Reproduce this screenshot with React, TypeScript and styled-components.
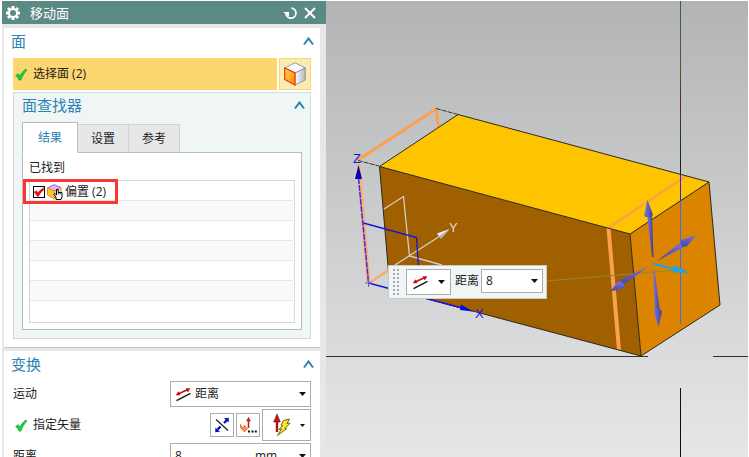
import React from "react";
import styled, { createGlobalStyle, css } from "styled-components";

const GlobalStyle = createGlobalStyle`
  * { box-sizing: border-box; }
  body {
    margin: 0;
    background: #fff;
    color: #1c1c1c;
    font-family: "Open Sans", "Noto Sans CJK SC", sans-serif;
    font-size: 12px;
    line-height: 20px;
    overflow: hidden;
  }
  button, input, select { font: inherit; color: inherit; margin: 0; padding: 0; }
  svg { display: block; }
`;

const Window = styled.div`
  display: grid;
  grid-template-columns: minmax(300px, 326px) 1fr;
  height: 100vh;
  padding: 1px 1px 0 0;
  overflow: hidden;
`;

/* ---------- dialog ---------- */

const Dialog = styled.aside`
  display: flex;
  flex-direction: column;
  gap: 4px;
  margin-left: 2px;
  min-height: 0;
  overflow: hidden;
  background: #e7e7e7;
`;

const TitleBar = styled.header`
  display: flex;
  flex: none;
  align-items: center;
  height: 23px;
  padding: 0 6px 0 3px;
  background: #5b8983;
  color: #fff;
`;

const DialogTitle = styled.h1`
  flex: 1;
  margin: 0 0 0 9px;
  font-size: 13px;
  font-weight: 400;
`;

const BarButton = styled.button`
  display: flex;
  align-items: center;
  justify-content: center;
  width: 20px;
  height: 20px;
  border: 0;
  background: none;
`;

const Card = styled.section`
  flex: none;
  margin: 0 6px 0 2px;
  padding: 0 9px 8px;
  background: #fff;
  box-shadow: 0 1px 0 #c8c8c8;
`;

const SectionHead = styled.div<{ $nested?: boolean }>`
  display: flex;
  align-items: center;
  justify-content: space-between;
  height: 26px;
  margin-bottom: 4px;
  padding-right: 0;
  ${(p) =>
    p.$nested
      ? css`
          height: 24px;
          margin-bottom: 5px;
          padding-right: 5px;
          padding-left: 8px;
        `
      : css`
          margin-left: -2px;
          margin-right: -3px;
        `}
`;

const SectionTitle = styled.h2`
  margin: 0;
  color: #2b82b4;
  font-size: 15px;
  font-weight: 400;
  line-height: 22px;
`;

const CollapseButton = styled.button`
  width: 11px;
  height: 10px;
  border: 0;
  background: none;
  margin-right: 0;
  ${SectionHead} > & { flex: none; }
`;

const SelectRow = styled.div`
  display: flex;
  gap: 2px;
  height: 32px;
`;

const SelectStep = styled.button`
  display: flex;
  flex: 1;
  align-items: center;
  gap: 6px;
  padding-left: 2px;
  border: 0;
  background: #fcd66f;
`;

const CubeButton = styled.button`
  display: flex;
  align-items: center;
  justify-content: center;
  width: 32px;
  border: 1px solid #fcd66f;
  background: #f9ebb4;
`;

const Finder = styled.section`
  margin-top: 2px;
  padding-bottom: 8px;
  border: 1px solid #d8dada;
  background: #f0f6f6;
`;

const Tabs = styled.div`
  display: flex;
  align-items: flex-end;
  margin: 0 8px -1px;
  height: 31px;
`;

const Tab = styled.button<{ $active?: boolean }>`
  width: 51px;
  height: 29px;
  border: 1px solid #d3d3d3;
  border-left-width: 0;
  border-bottom-color: #bbb;
  background: #e7e7e7;
  ${(p) =>
    p.$active &&
    css`
      position: relative;
      width: 56px;
      height: 31px;
      border-color: #bbb;
      border-left-width: 1px;
      border-bottom-color: #fff;
      background: #fff;
      color: #2b82b4;
    `}
`;

const TabPage = styled.div`
  margin: 0 8px;
  padding: 5px 6px 6px;
  border: 1px solid #bbb;
  background: #fff;
`;

const FoundLabel = styled.div`
  height: 22px;
`;

const ResultList = styled.ul`
  margin: 0;
  padding: 0 1px 1px 0;
  border: 1px solid #d8d8d8;
  list-style: none;
`;

const ResultRow = styled.li`
  height: 20px;
  border-bottom: 1px solid #e6e6e6;
  &:nth-child(even) { background: #f9f9f9; }
  &:last-child { border-bottom: 0; }
  &:first-child { position: relative; z-index: 1; }
`;

const ResultLabel = styled.label`
  display: flex;
  align-items: center;
  height: 21px;
  gap: 2px;
  padding-left: 3px;
`;

const TickBox = styled.input`
  width: 12px;
  height: 12px;
  border: 1px solid #000;
  appearance: none;
  background: #fff;
  &:not(:checked) + svg { display: none; }
`;

const TickWrap = styled.span`
  position: relative;
  display: inline-flex;
  svg {
    position: absolute;
    left: 1px;
    top: 1px;
    pointer-events: none;
  }
`;

const Highlight = styled.span`
  position: absolute;
  left: -7px;
  top: -2px;
  width: 95px;
  height: 25px;
  border: 3px solid #fb3434;
  pointer-events: none;
`;

const Fields = styled.div`
  display: grid;
  grid-template-columns: 1fr 141px;
  row-gap: 2px;
  align-items: center;
`;

const FieldLabel = styled.label`
  display: flex;
  align-items: center;
  gap: 6px;
`;

const StepLabel = styled.span`
  display: flex;
  align-items: center;
  gap: 6px;
  padding-left: 2px;
`;

const Combo = styled.div<{ $h: number; $w?: number }>`
  display: flex;
  align-items: center;
  height: ${(p) => p.$h}px;
  ${(p) => p.$w && css`width: ${p.$w}px;`}
  padding: 0 4px;
  border: 1px solid #acacac;
  background: #fff;
  svg { flex: none; }
`;

const Picker = styled.select`
  flex: 1;
  min-width: 0;
  height: 20px;
  margin-left: 3px;
  border: 0;
  outline: 0;
  appearance: none;
  background: none;
`;

const NumberBox = styled.input`
  flex: 1;
  min-width: 0;
  width: 20px;
  height: 20px;
  border: 0;
  outline: 0;
  background: none;
`;

const UnitPicker = styled(Picker)`
  flex: none;
  width: 44px;
  margin: 0;
`;

const VectorTools = styled.div`
  display: flex;
  align-items: center;
  justify-content: flex-end;
  gap: 2px;
`;

const ToolButton = styled.button<{ $large?: boolean }>`
  display: flex;
  flex: none;
  align-items: center;
  justify-content: center;
  width: 24px;
  height: 24px;
  border: 1px solid #acacac;
  background: #fff;
  ${(p) =>
    p.$large &&
    css`
      justify-content: space-between;
      width: 49px;
      height: 32px;
      padding: 0 5px 0 9px;
    `}
`;

/* ---------- graphics view ---------- */

const Viewport = styled.main`
  position: relative;
  min-width: 0;
  min-height: 0;
  overflow: hidden;
  background: linear-gradient(#b3b4b6, #cacbcc 45%, #dbdcdd 78%, #e5e6e7);
`;

const Scene = styled.svg`
  width: 100%;
  height: 100%;
`;

const FloatingBar = styled.div`
  position: absolute;
  left: 62px;
  top: 264px;
  display: flex;
  align-items: flex-start;
  height: 34px;
  padding: 3px 3px 0 4px;
  border: 1px solid #c6cccc;
  background: #f0f6f6;
`;

const FloatLabel = styled.label`
  margin: 2px 2px 0 4px;
`;

const Grip = styled.span`
  width: 6px;
  height: 26px;
  margin-right: 7px;
`;

const MotionButton = styled.button`
  display: flex;
  align-items: center;
  justify-content: space-between;
  width: 45px;
  height: 26px;
  padding: 0 5px;
  border: 1px solid #acacac;
  background: #fff;
`;

/* ---------- icons ---------- */

const GearIcon = () => (
  <svg width="16" height="16" viewBox="0 0 16 16">
    <g stroke="#fff" strokeWidth="3">
      <path d="M8 1v14M1 8h14M3 3l10 10M13 3L3 13" />
    </g>
    <circle cx="8" cy="8" r="5" fill="#fff" />
    <circle cx="8" cy="8" r="3" fill="#5b8983" />
  </svg>
);

const ResetIcon = () => (
  <svg width="14" height="14" viewBox="0 0 14 14">
    <path d="M8.500 2.200A5 5 0 1 1 3 8" fill="none" stroke="#fff" strokeWidth="1.800" />
    <path d="M0 6h6v4.500z" fill="#fff" />
  </svg>
);

const CloseIcon = () => (
  <svg width="12" height="12" viewBox="0 0 12 12" stroke="#fff" strokeWidth="2">
    <path d="M1 1l10 10M11 1L1 11" />
  </svg>
);

const ChevronUp = () => (
  <svg width="11" height="10" viewBox="0 0 11 10" fill="none" stroke="#2b82b4" strokeWidth="2">
    <path d="M1 8.500l4.500-6 4.500 6" />
  </svg>
);

const CheckIcon = () => (
  <svg width="12" height="13" viewBox="0 0 12 13">
    <path
      d="M.8 7.500l2.400-1.700 2 2.400C6.500 5.200 8.500 2.500 11 1l.6 1.600C9 5 7 8.500 5.800 12H4.200C3.500 10.300 2.300 8.700.8 7.500z"
      fill="#23cf3c"
      stroke="#12a830"
      strokeWidth=".9"
    />
  </svg>
);

const FaceCubeIcon = () => (
  <svg width="22" height="24" viewBox="0 0 22 24">
    <defs>
      <linearGradient id="cubeFace" x2="1" y2="1">
        <stop offset="0" stopColor="#ffd83a" />
        <stop offset="1" stopColor="#ff8c10" />
      </linearGradient>
      <linearGradient id="cubeSide" x2="1">
        <stop offset="0" stopColor="#fff" />
        <stop offset="1" stopColor="#b5b5b9" />
      </linearGradient>
    </defs>
    <path d="M.7 6L11 .8 21.300 6 11 11z" fill="#fbfbff" stroke="#888" strokeWidth=".8" />
    <path d="M11 11l10.300-5v12L11 23z" fill="url(#cubeSide)" stroke="#888" strokeWidth=".8" />
    <path d="M.7 6L11 11v12L.7 17.500z" fill="url(#cubeFace)" stroke="#f03018" strokeWidth="1.200" />
  </svg>
);

const RedTick = () => (
  <svg width="10" height="10" viewBox="0 0 10 10">
    <path d="M0 5l2.500-1.500 1.500 2C5.500 3.500 7.500 1.500 9.800.5v2.800C7.500 4.800 6 6.800 4.800 9.500H3.200z" fill="#e01010" />
  </svg>
);

const OffsetIcon = () => (
  <svg width="16" height="16" viewBox="0 0 16 16">
    <path d="M.5 4L7 .7 14 3.500 7.500 7z" fill="#dcb5fa" stroke="#a65bdc" />
    <path d="M.5 4l7 3v8l-7-4z" fill="#ffc329" stroke="#f08a12" />
    <path d="M7.500 7L14 3.500V10l-6.500 4z" fill="#ffe09a" stroke="#e68a2c" />
    <path
      d="M9 15.500V13L6.700 10.300l1-.9L9.500 11V5.500h1.700V8.500H15v4.500l-1 2.500z"
      fill="#fff"
      stroke="#000"
    />
    <path d="M11.300 8.500v2M13.200 8.500v2" stroke="#000" strokeWidth=".7" />
  </svg>
);

const DistanceIcon = () => (
  <svg width="17" height="15" viewBox="0 0 17 15">
    <path d="M3 7L13 2.500" stroke="#c40c0c" strokeWidth="1.600" />
    <path d="M.8 8.300L3.300 4.200 5.400 8.200zM15.300 1.200L12.800 5.400 10.700 1.200z" fill="#c40c0c" />
    <path d="M1.500 13.700L15.500 6.400" stroke="#151515" strokeWidth="1.400" />
  </svg>
);

const Caret = ({ small }: { small?: boolean }) => (
  <svg width={small ? 5 : 7} height={small ? 3 : 4} viewBox="0 0 7 4">
    <path d="M0 0h7L3.500 4z" fill="#111" />
  </svg>
);

const ReverseIcon = () => (
  <svg width="16" height="16" viewBox="0 0 16 16">
    <path d="M2 2.500L14 13.500" stroke="#222" strokeWidth="1.300" />
    <path d="M3.500 12.500l3-3M10 6l3-3" stroke="#0810bd" strokeWidth="2.400" />
    <path d="M1.300 15.300V10.500l4.700 4.300zM14.700.7v4.800L10 1.200z" fill="#0810bd" />
  </svg>
);

const VectorDialogIcon = () => (
  <svg width="18" height="18" viewBox="0 0 18 18">
    <path d="M9.500 12V4" stroke="#c51818" strokeWidth="1.600" />
    <path d="M9.500 .8l2.300 4.500H7.200z" fill="#c51818" />
    <path d="M1.500 8.500C2 11 3.500 11.500 5 11.500V9.300L8.500 12.800 5 16v-2C2.500 14 .8 12 1.500 8.500z" fill="#f8a33a" stroke="#e2571d" strokeWidth=".8" />
    <path d="M9 14.500h2v2h-2zM12.500 14.500h2v2h-2zM15.800 14.500h2v2h-2z" fill="#111" />
  </svg>
);

const InferredVectorIcon = () => (
  <svg width="19" height="24" viewBox="0 0 19 24">
    <path d="M5 19V7" stroke="#b30f0f" strokeWidth="2.400" />
    <path d="M5 1l3.300 8H1.700z" fill="#c51818" stroke="#7d0909" strokeWidth=".6" />
    <path d="M11.500 7.500l6-1.500-2.500 4.500 3-.3-5 5.300 1.500.3L5.500 22.500l4-6.500-2.500.5 3.500-4-1.500-.3z" fill="#ffe52e" stroke="#5d5518" strokeWidth=".9" />
  </svg>
);

const GripDots = () => (
  <svg width="6" height="26" viewBox="0 0 6 26" fill="#aaaaaa">
    {[0, 4, 8, 12, 16, 20, 24].map((y) => (
      <g key={y}>
        <path d={`M0 ${y}h2v2h-2z`} />
        <path d={`M4 ${y}h2v2h-2z`} />
      </g>
    ))}
  </svg>
);

const Model = () => (
  <Scene viewBox="326 1 422 456" preserveAspectRatio="xMinYMin slice" role="img" aria-label="3D">
    <defs>
      <linearGradient id="shaft" x2="1">
        <stop offset="0" stopColor="#7774dc" />
        <stop offset=".5" stopColor="#5f5cbf" />
        <stop offset="1" stopColor="#3d3a86" />
      </linearGradient>
      <linearGradient id="shaftFlat" x2="0" y2="1">
        <stop offset="0" stopColor="#7875e0" />
        <stop offset="1" stopColor="#4744a2" />
      </linearGradient>
      <linearGradient id="guide" gradientUnits="userSpaceOnUse" x1="0" x2="0" y1="1" y2="174">
        <stop offset="0" stopColor="#4c5a4c" />
        <stop offset=".4" stopColor="#54562c" />
        <stop offset=".58" stopColor="#5a2525" />
        <stop offset=".68" stopColor="#343d34" />
        <stop offset="1" stopColor="#112211" />
      </linearGradient>
    </defs>
    <path d="M326 356.500H648M713 356.500H748" stroke="#3a2a32" />
    <path d="M358 160L436 109L438.500 128" fill="none" stroke="#fca04c" strokeWidth="3" />
    <path d="M358 160.500L379 166M436 108.500L458 114.500" stroke="#30343a" strokeDasharray="5 1" />

    <path d="M379.500 166.500L458 114.500L709 182L630 234z" fill="#ffc400" />
    <path d="M379.500 166.500L630 234L641 356L390 289z" fill="#a06000" />
    <path d="M630 234L709 182L720 305L641 356z" fill="#db8400" />
    <path d="M608.500 228L686 176" stroke="#fca04c" strokeWidth="2.500" />
    <path d="M608.500 228L619 350" stroke="#fca04c" strokeWidth="4" />
    <path
      d="M379.500 166.500L458 114.500L709 182L720 305L641 356L390 289zM379.500 166.500L630 234L709 182M630 234L641 356"
      fill="none"
      stroke="#2b2920"
      strokeWidth="1"
    />
    <path d="M546 281L690 269" stroke="#9a823c" />

    <path d="M358.500 164L368.500 282.500" stroke="#f6b07c" strokeWidth="4" />
    <path d="M358.500 178L368.500 282.500" stroke="#4c28d8" strokeWidth="1.500" strokeDasharray="6 1" />
    <path d="M368.500 283.500L388 270.500" stroke="#f6ab70" strokeWidth="2.500" />
    <path d="M384 209L403.500 196.500L409.500 256L442 265M388 269.500L440 236" fill="none" stroke="#d3cccb" strokeWidth="1.300" />
    <path d="M437 233.500L449.500 229L441 238.800z" fill="#f1f1f1" />
    <path d="M439 236L449.500 229L441 238.800z" fill="#b4b0aa" />
    <path d="M363.500 223L416.500 237.500L418.500 266M368.500 283L462 308" fill="none" stroke="#1712df" strokeWidth="1.300" />
    <path d="M355 179L358.500 165L362 179z" fill="#0404ae" />
    <path d="M461 304.500L473 311.500L460 310z" fill="#0505e9" />
    <path d="M365 283h7M368.500 279v8" stroke="#6557d9" />
    <g fontFamily="Liberation Sans" fontSize="13">
      <text x="353" y="163" fill="#1616ee">Z</text>
      <text x="449" y="232" fill="#dddddd">Y</text>
      <text x="475" y="318" fill="#1616ee">X</text>
    </g>

    <path d="M680.500 1V174" stroke="url(#guide)" />
    <path d="M680.500 174V324" stroke="#3e70e4" />
    <path d="M680.500 174V201" stroke="#2424ef" />
    <path d="M680.500 388V457" stroke="#160d0b" />

    <path d="M647 214h5l1.500 43h-1.500z" fill="url(#shaft)" />
    <path d="M647.500 200L653 215Q649 219 644 216z" fill="url(#shaft)" />
    <path d="M653.200 270h1.300L660 312h-5z" fill="url(#shaft)" />
    <path d="M653.800 311Q658 307 662 311L658.500 327z" fill="url(#shaft)" />
    <path d="M657 261L681 242L684 247z" fill="url(#shaftFlat)" />
    <path d="M681 240L696.500 235L687 246Q679 249 681 240z" fill="url(#shaftFlat)" />
    <path d="M649.500 266L620 280L623 285z" fill="url(#shaftFlat)" />
    <path d="M610.500 291.500L617 282Q626 281 624 288z" fill="url(#shaftFlat)" />
    <path d="M653 263.500L675 269.500" stroke="#15a9ec" strokeWidth="2" />
    <path d="M674.500 265.500L689 273L674 272.500Q671 269 674.500 265.500z" fill="#12a8ed" />
  </Scene>
);

type HeadProps = { title: string; nested?: boolean };

const Heading = ({ title, nested }: HeadProps) => (
  <SectionHead $nested={nested}>
    <SectionTitle>{title}</SectionTitle>
    <CollapseButton aria-label={title}>
      <ChevronUp />
    </CollapseButton>
  </SectionHead>
);

export default function App() {
  return (
    <>
      <GlobalStyle />
      <Window>
        <Dialog>
          <TitleBar>
            <GearIcon />
            <DialogTitle>移动面</DialogTitle>
            <BarButton aria-label="重置"><ResetIcon /></BarButton>
            <BarButton aria-label="关闭"><CloseIcon /></BarButton>
          </TitleBar>

          <Card>
            <Heading title="面" />
            <SelectRow>
              <SelectStep>
                <CheckIcon />
                选择面 (2)
              </SelectStep>
              <CubeButton aria-label="面"><FaceCubeIcon /></CubeButton>
            </SelectRow>
            <Finder>
              <Heading title="面查找器" nested />
              <Tabs role="tablist">
                <Tab role="tab" aria-selected="true" $active>结果</Tab>
                <Tab role="tab" aria-selected="false">设置</Tab>
                <Tab role="tab" aria-selected="false">参考</Tab>
              </Tabs>
              <TabPage role="tabpanel">
                <FoundLabel>已找到</FoundLabel>
                <ResultList>
                  <ResultRow>
                    <ResultLabel>
                      <TickWrap>
                        <TickBox type="checkbox" defaultChecked />
                        <RedTick />
                      </TickWrap>
                      <OffsetIcon />
                      偏置 (2)
                    </ResultLabel>
                    <Highlight />
                  </ResultRow>
                  {[1, 2, 3, 4, 5, 6].map((n) => (
                    <ResultRow key={n} />
                  ))}
                </ResultList>
              </TabPage>
            </Finder>
          </Card>

          <Card>
            <Heading title="变换" />
            <Fields>
              <FieldLabel htmlFor="motion">运动</FieldLabel>
              <Combo $h={26}>
                <DistanceIcon />
                <Picker id="motion" defaultValue="d"><option value="d">距离</option></Picker>
                <Caret />
              </Combo>
              <StepLabel>
                <CheckIcon />
                指定矢量
              </StepLabel>
              <VectorTools>
                <ToolButton aria-label="反向"><ReverseIcon /></ToolButton>
                <ToolButton aria-label="矢量对话框"><VectorDialogIcon /></ToolButton>
                <ToolButton aria-label="自动判断的矢量" $large>
                  <InferredVectorIcon />
                  <Caret small />
                </ToolButton>
              </VectorTools>
              <FieldLabel htmlFor="distance">距离</FieldLabel>
              <Combo $h={26}>
                <NumberBox id="distance" defaultValue="8" />
                <UnitPicker aria-label="单位" defaultValue="mm"><option>mm</option></UnitPicker>
                <Caret />
              </Combo>
            </Fields>
          </Card>
        </Dialog>

        <Viewport>
          <Model />
          <FloatingBar>
            <Grip><GripDots /></Grip>
            <MotionButton aria-label="运动">
              <DistanceIcon />
              <Caret />
            </MotionButton>
            <FloatLabel htmlFor="floatDistance">距离</FloatLabel>
            <Combo $h={24} $w={62}>
              <NumberBox id="floatDistance" defaultValue="8" />
              <Caret />
            </Combo>
          </FloatingBar>
        </Viewport>
      </Window>
    </>
  );
}
